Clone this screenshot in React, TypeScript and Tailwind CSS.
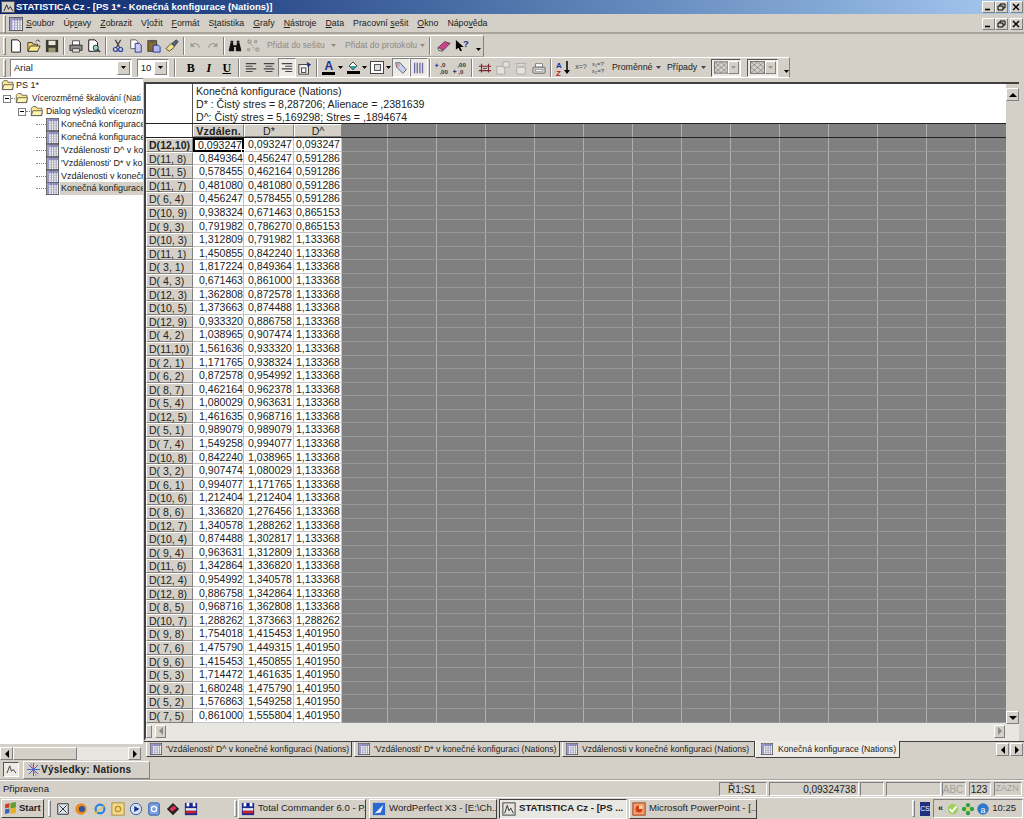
import type { ReactNode } from "react";

const raised = "border border-t-white border-l-white border-r-[#808080] border-b-[#808080]";
const sunken = "border border-t-[#808080] border-l-[#808080] border-r-white border-b-white";

const rows: [string, string, string, string][] = [
  ["D(12,10)", "0,093247", "0,093247", "0,093247"],
  ["D(11, 8)", "0,849364", "0,456247", "0,591286"],
  ["D(11, 5)", "0,578455", "0,462164", "0,591286"],
  ["D(11, 7)", "0,481080", "0,481080", "0,591286"],
  ["D( 6, 4)", "0,456247", "0,578455", "0,591286"],
  ["D(10, 9)", "0,938324", "0,671463", "0,865153"],
  ["D( 9, 3)", "0,791982", "0,786270", "0,865153"],
  ["D(10, 3)", "1,312809", "0,791982", "1,133368"],
  ["D(11, 1)", "1,450855", "0,842240", "1,133368"],
  ["D( 3, 1)", "1,817224", "0,849364", "1,133368"],
  ["D( 4, 3)", "0,671463", "0,861000", "1,133368"],
  ["D(12, 3)", "1,362808", "0,872578", "1,133368"],
  ["D(10, 5)", "1,373663", "0,874488", "1,133368"],
  ["D(12, 9)", "0,933320", "0,886758", "1,133368"],
  ["D( 4, 2)", "1,038965", "0,907474", "1,133368"],
  ["D(11,10)", "1,561636", "0,933320", "1,133368"],
  ["D( 2, 1)", "1,171765", "0,938324", "1,133368"],
  ["D( 6, 2)", "0,872578", "0,954992", "1,133368"],
  ["D( 8, 7)", "0,462164", "0,962378", "1,133368"],
  ["D( 5, 4)", "1,080029", "0,963631", "1,133368"],
  ["D(12, 5)", "1,461635", "0,968716", "1,133368"],
  ["D( 5, 1)", "0,989079", "0,989079", "1,133368"],
  ["D( 7, 4)", "1,549258", "0,994077", "1,133368"],
  ["D(10, 8)", "0,842240", "1,038965", "1,133368"],
  ["D( 3, 2)", "0,907474", "1,080029", "1,133368"],
  ["D( 6, 1)", "0,994077", "1,171765", "1,133368"],
  ["D(10, 6)", "1,212404", "1,212404", "1,133368"],
  ["D( 8, 6)", "1,336820", "1,276456", "1,133368"],
  ["D(12, 7)", "1,340578", "1,288262", "1,133368"],
  ["D(10, 4)", "0,874488", "1,302817", "1,133368"],
  ["D( 9, 4)", "0,963631", "1,312809", "1,133368"],
  ["D(11, 6)", "1,342864", "1,336820", "1,133368"],
  ["D(12, 4)", "0,954992", "1,340578", "1,133368"],
  ["D(12, 8)", "0,886758", "1,342864", "1,133368"],
  ["D( 8, 5)", "0,968716", "1,362808", "1,133368"],
  ["D(10, 7)", "1,288262", "1,373663", "1,288262"],
  ["D( 9, 8)", "1,754018", "1,415453", "1,401950"],
  ["D( 7, 6)", "1,475790", "1,449315", "1,401950"],
  ["D( 9, 6)", "1,415453", "1,450855", "1,401950"],
  ["D( 5, 3)", "1,714472", "1,461635", "1,401950"],
  ["D( 9, 2)", "1,680248", "1,475790", "1,401950"],
  ["D( 5, 2)", "1,576863", "1,549258", "1,401950"],
  ["D( 7, 5)", "0,861000", "1,555804", "1,401950"],
];

const menus: [string, string, string][] = [
  ["", "S", "oubor"],
  ["Úp", "r", "avy"],
  ["", "Z", "obrazit"],
  ["V", "l", "ožit"],
  ["", "F", "ormát"],
  ["S", "t", "atistika"],
  ["", "G", "rafy"],
  ["", "N", "ástroje"],
  ["", "D", "ata"],
  ["Pracovní ", "s", "ešit"],
  ["", "O", "kno"],
  ["Nápo", "v", "ěda"],
];

const grayCols = Array.from({ length: 14 }, (_, i) => i);

function Ico({ children, className = "w-[14px] h-[14px]" }: { children: ReactNode; className?: string }) {
  return (
    <svg viewBox="0 0 16 16" className={`${className} shrink-0`}>
      {children}
    </svg>
  );
}

function Slot({ w = "w-[18px]", pressed = false, children }: { w?: string; pressed?: boolean; children: ReactNode }) {
  return (
    <div
      className={`${w} h-[19px] shrink-0 flex items-center justify-center ${
        pressed ? "border border-t-[#808080] border-l-[#808080] border-r-white border-b-white bg-[#eceae5]" : ""
      }`}
    >
      {children}
    </div>
  );
}

function Sep({ w = "w-[6px]" }: { w?: string }) {
  return (
    <div className={`${w} shrink-0 flex justify-center`}>
      <div className="w-[2px] h-[18px] border-l border-l-[#808080] border-r border-r-white" />
    </div>
  );
}

function Grip() {
  return <div className="w-[3px] h-[18px] ml-[3px] shrink-0 border border-t-white border-l-white border-r-[#808080] border-b-[#808080]" />;
}

function Caret({ color = "#000" }: { color?: string }) {
  return (
    <svg viewBox="0 0 5 3" className="w-[5px] h-[3px] shrink-0">
      <path d="M0 0h5L2.5 3z" fill={color} />
    </svg>
  );
}

function Combo({ w, text }: { w: string; text: string }) {
  return (
    <div className={`${w} h-[18px] shrink-0 flex items-center bg-white ${sunken}`}>
      <span className="flex-1 pl-[3px] text-[9.5px] text-[#222] leading-none">{text}</span>
      <div className={`w-[13px] h-[14px] mr-[1px] flex items-center justify-center bg-[#d4d0c8] ${raised}`}>
        <Caret />
      </div>
    </div>
  );
}

function Lines({ align }: { align: "l" | "c" | "r" }) {
  const alt = align === "l" ? "M2 6h8M2 12h8" : align === "c" ? "M4 6h8M4 12h8" : "M6 6h8M6 12h8";
  return (
    <Ico>
      <path d="M2 3h12M2 9h12" stroke="#444" strokeWidth="1.3" />
      <path d={alt} stroke="#444" strokeWidth="1.3" />
    </Ico>
  );
}

function GridIco({ className = "w-[13px] h-[13px]" }: { className?: string }) {
  return (
    <Ico className={className}>
      <rect x="0.5" y="0.5" width="15" height="15" fill="#fff" stroke="#444" />
      <rect x="1" y="1" width="14" height="3" fill="#9a9ac8" />
      <rect x="1" y="1" width="3" height="14" fill="#9a9ac8" />
      <path d="M6.5 1v14M9.5 1v14M12.5 1v14" stroke="#7676b0" />
      <path d="M4 6.5h11M4 9.5h11M4 12.5h11" stroke="#b4b4b4" />
    </Ico>
  );
}

function Folder({ open = false }: { open?: boolean }) {
  return (
    <Ico className="w-[14px] h-[13px]">
      <path d="M1 4l2-2h4l1 2h6v9H1z" fill="#ffe98a" stroke="#555" />
      {open ? <path d="M1 13l2-6h12l-2 6z" fill="#fff3b0" stroke="#555" /> : null}
    </Ico>
  );
}

function Box() {
  return (
    <div className="w-[8px] h-[8px] border border-[#808080] bg-white flex items-center justify-center shrink-0">
      <div className="w-[4px] h-px bg-black" />
    </div>
  );
}

function Leaf({ text, selected = false }: { text: string; selected?: boolean }) {
  return (
    <div className="h-[12.9px] flex items-center pl-[36px]">
      <div className="w-[10px] border-t border-dotted border-[#808080] shrink-0" />
      <GridIco className="w-[13px] h-[13px]" />
      <span className={`ml-[1px] pl-[1px] flex-1 leading-[13px] ${selected ? "bg-[#d4d0c8]" : ""}`}>{text}</span>
    </div>
  );
}

function Tab({ w, text }: { w: string; text: string }) {
  return (
    <div className={`${w} h-[15px] shrink-0 flex items-center gap-[4px] pl-[3px] bg-[#d4d0c8] border-r border-b border-r-[#404040] border-b-[#404040] border-l border-l-white`}>
      <GridIco className="w-[12px] h-[12px]" />
      <span className="whitespace-nowrap">{text}</span>
    </div>
  );
}

function Arrow({ dir, color = "#000" }: { dir: "l" | "r" | "u" | "d"; color?: string }) {
  const d = { l: "M5 0v8L1 4z", r: "M1 0v8l4-4z", u: "M0 5h8L4 1z", d: "M0 1h8L4 5z" }[dir];
  const size = dir === "l" || dir === "r" ? "w-[6px] h-[8px]" : "w-[8px] h-[6px]";
  const box = dir === "l" || dir === "r" ? "0 0 6 8" : "0 0 8 6";
  return (
    <svg viewBox={box} className={size}>
      <path d={d} fill={color} />
    </svg>
  );
}

function ScrollBtn({ dir, color, className = "w-[13px] h-[13px]" }: { dir: "l" | "r" | "u" | "d"; color?: string; className?: string }) {
  return (
    <div className={`${className} shrink-0 flex items-center justify-center bg-[#d4d0c8] ${raised}`}>
      <Arrow dir={dir} color={color} />
    </div>
  );
}

function Pattern() {
  return (
    <svg viewBox="0 0 14 12" className="w-[15px] h-[13px]">
      <rect x="0.5" y="0.5" width="13" height="11" fill="#d4d0c8" stroke="#777" />
      <path d="M1 1l12 10M13 1L1 11M7 1l6 5-6 5-6-5z" stroke="#777" strokeWidth="0.6" fill="none" />
    </svg>
  );
}

function PatternCombo({ w }: { w: string }) {
  return (
    <div className={`${w} h-[18px] shrink-0 flex items-center justify-between pl-[2px] pr-[1px] bg-[#eceae5] border border-t-[#555] border-l-[#555] border-r-white border-b-white`}>
      <Pattern />
      <div className={`w-[11px] h-[13px] flex items-center justify-center bg-[#d4d0c8] ${raised}`}>
        <Caret color="#999" />
      </div>
    </div>
  );
}

function Task({ w, pressed, icon, text }: { w: string; pressed?: boolean; icon: ReactNode; text: string }) {
  return (
    <div
      className={`${w} h-[20px] shrink-0 flex items-center gap-[3px] pl-[2px] whitespace-nowrap overflow-hidden ${
        pressed ? "bg-[#e9e7e2] font-bold border border-t-[#404040] border-l-[#404040] border-r-white border-b-white" : `bg-[#d4d0c8] border border-t-white border-l-white border-r-[#404040] border-b-[#404040]`
      }`}
    >
      {icon}
      <span>{text}</span>
    </div>
  );
}

function StatusCell({ w, children, className = "" }: { w: string; children?: ReactNode; className?: string }) {
  return <div className={`${w} h-[14px] shrink-0 flex items-center justify-end pr-[2px] ${sunken} ${className}`}>{children}</div>;
}

function GrayCells() {
  return (
    <>
      {grayCols.map(c => (
        <div key={c} className={`${c === 0 ? "w-[46px]" : "w-[49px]"} shrink-0 border-r border-r-[#b0b0b0]`} />
      ))}
    </>
  );
}

export default function App() {
  return (
    <div className="w-[1024px] h-[819px] overflow-hidden flex flex-col bg-[#d4d0c8] text-black text-[9px] font-['Liberation_Sans',Arial,sans-serif]">
      {/* title bar */}
      <div className="h-[14px] shrink-0 flex items-center bg-gradient-to-r from-[#0a246a] to-[#a6caf0] text-white">
        <div className="w-[14px] h-[12px] ml-[1px] flex items-center justify-center bg-[#d4d0c8] border border-[#555]">
          <svg viewBox="0 0 12 10" className="w-[11px] h-[9px]">
            <path d="M1 9l3-7 2 5 2-3 3 5" fill="none" stroke="#223" strokeWidth="1" />
          </svg>
        </div>
        <span className="ml-[1px] font-bold text-[9.5px] leading-none whitespace-nowrap">STATISTICA Cz - [PS 1* - Konečná konfigurace (Nations)]</span>
        <div className="ml-auto mr-[1px] flex">
          <WinBtn kind="min" />
          <WinBtn kind="max" />
          <div className="w-[2px]" />
          <WinBtn kind="close" />
        </div>
      </div>

      {/* menu bar */}
      <div className="h-[19px] shrink-0 mt-[1px] flex items-center border-b-2 border-b-[#a8a49c] text-[#222]">
        <Grip />
        <div className="w-[15px] h-[14px] ml-[2px] shrink-0 flex items-center justify-center">
          <GridIco className="w-[14px] h-[14px]" />
        </div>
        <div className="ml-[3px] flex items-center gap-[9px] text-[8.8px]">
          {menus.map(m => (
            <span key={m[0] + m[1]} className="whitespace-pre">
              {m[0]}
              <span className="underline">{m[1]}</span>
              {m[2]}
            </span>
          ))}
        </div>
        <div className="ml-auto mr-[1px] flex">
          <WinBtn kind="min" />
          <WinBtn kind="max" />
          <div className="w-[2px]" />
          <WinBtn kind="close" />
        </div>
      </div>

      {/* standard toolbar */}
      <div className="h-[23px] shrink-0 flex items-center">
        <div className="w-[484px] h-[22px] flex items-center border-t border-t-white border-r border-r-[#808080] border-b border-b-[#a8a49c]">
          <Grip />
          <div className="w-[1px]" />
          <Slot><Ico><path d="M3 1h7l3 3v11H3z" fill="#fff" stroke="#000" /></Ico></Slot>
          <Slot>
            <Ico>
              <path d="M1 14V4h5l1 2h5v8z" fill="#f0d060" stroke="#333" />
              <path d="M1 14l3-6h11l-3 6z" fill="#ffe98a" stroke="#333" />
              <path d="M10 3l2-2 3 2" stroke="#333" fill="none" />
            </Ico>
          </Slot>
          <Slot>
            <Ico>
              <rect x="1" y="1" width="14" height="14" fill="#3a3a30" />
              <rect x="4" y="2" width="8" height="5" fill="#e8e8d8" />
              <rect x="4" y="10" width="8" height="5" fill="#9a9a70" />
            </Ico>
          </Slot>
          <Sep />
          <Slot>
            <Ico>
              <path d="M4 2h8v5H4z" fill="#fff" stroke="#444" />
              <path d="M1 7h14v6H1z" fill="#8a8a8a" stroke="#333" />
              <path d="M4 11h8v4H4z" fill="#ddd" stroke="#444" />
            </Ico>
          </Slot>
          <Slot>
            <Ico>
              <path d="M2 1h7l3 3v10H2z" fill="#fff" stroke="#000" />
              <circle cx="10" cy="10" r="3" fill="#8fd0d0" stroke="#222" />
              <path d="M12 12l3 3" stroke="#222" strokeWidth="1.5" />
            </Ico>
          </Slot>
          <Sep />
          <Slot>
            <Ico>
              <path d="M5 1l5 9M11 1L6 10" stroke="#333" strokeWidth="1.2" />
              <circle cx="5" cy="12" r="2.3" fill="none" stroke="#223ca0" strokeWidth="1.3" />
              <circle cx="11" cy="12" r="2.3" fill="none" stroke="#223ca0" strokeWidth="1.3" />
            </Ico>
          </Slot>
          <Slot>
            <Ico>
              <path d="M2 1h6l2 2v8H2z" fill="#fff" stroke="#555" />
              <path d="M7 5h5l2 2v8H7z" fill="#c8c8f0" stroke="#203090" />
            </Ico>
          </Slot>
          <Slot>
            <Ico>
              <rect x="1" y="2" width="10" height="12" fill="#8a6a30" stroke="#333" />
              <rect x="4" y="1" width="4" height="3" fill="#555" />
              <path d="M7 7h6l2 2v6H7z" fill="#b0b8f0" stroke="#203090" />
            </Ico>
          </Slot>
          <Slot>
            <Ico>
              <path d="M1 11l6-6 4 4-6 5z" fill="#f0e080" stroke="#444" />
              <path d="M8 5l5-4 2 2-4 5z" fill="#506880" stroke="#333" />
            </Ico>
          </Slot>
          <Sep w="w-[5px]" />
          <Slot>
            <Ico>
              <path d="M4 7c3-3 8-2 9 3" fill="none" stroke="#9a9a9a" strokeWidth="1.3" />
              <path d="M3 4v5h5z" fill="#9a9a9a" />
            </Ico>
          </Slot>
          <Slot>
            <Ico>
              <path d="M12 7C9 4 4 5 3 10" fill="none" stroke="#9a9a9a" strokeWidth="1.3" />
              <path d="M13 4v5H8z" fill="#9a9a9a" />
            </Ico>
          </Slot>
          <Sep w="w-[4px]" />
          <Slot>
            <Ico>
              <path d="M1 12l2-8h3v3h4V4h3l2 8v2H9V9H7v5H1z" fill="#111" />
              <rect x="3" y="2" width="3" height="2" fill="#111" />
              <rect x="10" y="2" width="3" height="2" fill="#111" />
            </Ico>
          </Slot>
          <Slot>
            <Ico>
              <path d="M4 5c4 2 5 5 5 8" fill="none" stroke="#777" strokeDasharray="1 1" />
              <circle cx="4" cy="3" r="2" fill="#bbb" stroke="#666" strokeWidth="0.5" />
              <circle cx="11" cy="3" r="1.5" fill="#bbb" stroke="#666" strokeWidth="0.5" />
              <circle cx="3" cy="12" r="1.5" fill="#bbb" stroke="#666" strokeWidth="0.5" />
              <circle cx="13" cy="12" r="2" fill="#bbb" stroke="#666" strokeWidth="0.5" />
            </Ico>
          </Slot>
          <div className="ml-[5px] flex items-center gap-[3px] text-[8.4px] text-[#8c8a84] whitespace-nowrap">
            <span className="w-[61px]">Přidat do sešitu</span>
            <Caret color="#8c8a84" />
          </div>
          <div className="ml-[9px] flex items-center gap-[3px] text-[8.6px] text-[#8c8a84] whitespace-nowrap">
            <span className="w-[72px]">Přidat do protokolu</span>
            <Caret color="#8c8a84" />
          </div>
          <Sep w="w-[10px]" />
          <Slot>
            <Ico>
              <path d="M1 10l8-7 6 2-8 8z" fill="#d04090" stroke="#444" />
              <path d="M1 10l1 3 5 1" fill="#fff" stroke="#444" />
            </Ico>
          </Slot>
          <Slot>
            <Ico>
              <path d="M1 1v11l3-2 2 4 2-1-2-4h4z" fill="#000" />
              <text x="9" y="9" fontSize="11" fontWeight="bold" fill="#1a2a90">?</text>
            </Ico>
          </Slot>
          <div className="ml-[5px] mt-[8px] w-[5px] flex flex-col items-center gap-px">
            <Caret />
          </div>
        </div>
      </div>

      {/* format toolbar */}
      <div className="h-[21px] shrink-0 flex items-center">
        <div className="w-[790px] h-[21px] flex items-center border-t border-t-white border-r border-r-[#808080] border-b border-b-white">
          <Grip />
          <div className="w-[5px]" />
          <Combo w="w-[122px]" text="Arial" />
          <div className="w-[6px]" />
          <Combo w="w-[32px]" text="10" />
          <Sep w="w-[13px]" />
          <Slot><span className="font-['Liberation_Serif',serif] font-bold text-[12px]">B</span></Slot>
          <Slot><span className="font-['Liberation_Serif',serif] font-bold italic text-[12px]">I</span></Slot>
          <Slot><span className="font-['Liberation_Serif',serif] font-bold underline text-[12px]">U</span></Slot>
          <Sep w="w-[6px]" />
          <Slot><Lines align="l" /></Slot>
          <Slot><Lines align="c" /></Slot>
          <Slot pressed><Lines align="r" /></Slot>
          <Slot>
            <Ico>
              <rect x="1" y="4" width="11" height="11" fill="#eee" stroke="#333" />
              <rect x="4" y="8" width="5" height="5" fill="#fff" stroke="#333" />
              <path d="M10 1l5 3-4 3" fill="#203090" />
            </Ico>
          </Slot>
          <Sep w="w-[6px]" />
          <Slot>
            <div className="flex flex-col items-center leading-none">
              <span className="font-bold text-[12px] leading-[12px] text-[#203090]">A</span>
              <div className="w-[13px] h-[3px] bg-black" />
            </div>
          </Slot>
          <Caret />
          <div className="w-[2px]" />
          <Slot>
            <div className="flex flex-col items-center">
              <svg viewBox="0 0 12 10" className="w-[12px] h-[10px]">
                <path d="M2 5l4-4 4 4-4 4z" fill="#fff" stroke="#444" />
                <path d="M2 5h8l-4 4z" fill="#30a0a0" />
              </svg>
              <div className="w-[13px] h-[3px] bg-black" />
            </div>
          </Slot>
          <Caret />
          <div className="w-[1px]" />
          <Slot>
            <div className="w-[14px] h-[13px] bg-white border border-[#444] flex items-center justify-center">
              <div className="w-[7px] h-[7px] border border-[#555] bg-[#ddd]" />
            </div>
          </Slot>
          <Caret />
          <div className="w-[1px]" />
          <Slot pressed>
            <Ico>
              <path d="M2 2h5l7 8-4 4-7-7z" fill="#c8d0f0" stroke="#555" />
              <circle cx="5" cy="5" r="1" fill="#fff" stroke="#c04040" strokeWidth="0.7" />
            </Ico>
          </Slot>
          <Slot pressed>
            <Ico>
              <path d="M3 2v12M6 2v12M9 2v12M12 2v12" stroke="#6868a8" strokeWidth="1.5" />
            </Ico>
          </Slot>
          <Sep w="w-[5px]" />
          <Slot>
            <Ico>
              <text x="6" y="7" fontSize="7" fontWeight="bold" fill="#333">,0</text>
              <text x="5" y="15" fontSize="7" fontWeight="bold" fill="#333">,00</text>
              <path d="M0 5h4M2 3v4" stroke="#203090" />
            </Ico>
          </Slot>
          <Slot>
            <Ico>
              <text x="5" y="7" fontSize="7" fontWeight="bold" fill="#333">,00</text>
              <text x="6" y="15" fontSize="7" fontWeight="bold" fill="#333">,0</text>
              <path d="M0 12h4M2 10v4" stroke="#203090" />
            </Ico>
          </Slot>
          <Sep w="w-[7px]" />
          <Slot>
            <Ico>
              <path d="M4 3v10M12 3v10M1 6h14M1 11h14" stroke="#7a2a30" strokeWidth="1.3" />
              <path d="M6 8.5h4" stroke="#555" strokeWidth="1.3" />
            </Ico>
          </Slot>
          <Slot>
            <Ico>
              <rect x="1" y="6" width="9" height="9" fill="#e4e2dc" stroke="#a8a8a8" />
              <path d="M8 1h7v6H8z" fill="#e4e2dc" stroke="#a8a8a8" />
            </Ico>
          </Slot>
          <Slot>
            <Ico>
              <path d="M2 3h12l-3 3H5zM3 7h10v8H3z" fill="#e4e2dc" stroke="#a8a8a8" />
            </Ico>
          </Slot>
          <Slot>
            <Ico>
              <path d="M4 3h8v4H4z" fill="#fff" stroke="#777" />
              <rect x="1" y="7" width="14" height="7" rx="1" fill="#ccc" stroke="#666" />
              <rect x="4" y="10" width="8" height="2" fill="#fff" stroke="#666" strokeWidth="0.5" />
            </Ico>
          </Slot>
          <Sep w="w-[7px]" />
          <Slot>
            <svg viewBox="0 0 16 16" className="w-4 h-4">
              <text x="0" y="8" fontSize="8" fontWeight="bold" fill="#2030a0">A</text>
              <text x="0" y="16" fontSize="8" fontWeight="bold" fill="#c02020">Z</text>
              <path d="M11 1v11" stroke="#000" strokeWidth="1.5" />
              <path d="M8 10h6l-3 4z" fill="#000" />
            </svg>
          </Slot>
          <span className="w-[16px] shrink-0 text-[7px] text-[#444] text-center whitespace-nowrap">x=?</span>
          <div className="w-[16px] shrink-0 flex flex-col text-[6px] leading-[6.5px] text-[#444] text-center whitespace-nowrap ml-[1px]">
            <span>x₁=?</span>
            <span>x₂=?</span>
          </div>
          <div className="ml-[6px] flex items-center gap-[4px] text-[8.8px] text-[#222] whitespace-nowrap">
            <span className="w-[40px]">Proměnné</span>
            <Caret color="#444" />
          </div>
          <div className="ml-[6px] flex items-center gap-[4px] text-[8.8px] text-[#222] whitespace-nowrap">
            <span className="w-[30px]">Případy</span>
            <Caret color="#444" />
          </div>
          <div className="w-[6px]" />
          <PatternCombo w="w-[30px]" />
          <div className="w-[8px]" />
          <PatternCombo w="w-[31px]" />
          <div className="ml-[6px] mt-[8px]">
            <Caret />
          </div>
        </div>
      </div>

      {/* tree + document */}
      <div className="flex-1 min-h-0 flex">
        <div className="w-[143px] shrink-0 flex flex-col">
          <div className="flex-1 min-h-0 bg-white overflow-hidden whitespace-nowrap text-[9px] text-[#222] border-t border-t-[#808080]">
            <div className="h-[13px] flex items-center pl-[1px] gap-[1px]">
              <Folder open />
              <span>PS 1*</span>
            </div>
            <div className="h-[13px] flex items-center pl-[3px]">
              <Box />
              <div className="w-[4px] border-t border-dotted border-[#808080] shrink-0" />
              <Folder open />
              <span className="ml-[3px] text-[8.3px]">Vícerozměrné škálování (Nati</span>
            </div>
            <div className="h-[13px] flex items-center pl-[18px]">
              <Box />
              <div className="w-[4px] border-t border-dotted border-[#808080] shrink-0" />
              <Folder open />
              <span className="ml-[2px] text-[8.6px]">Dialog výsledků vícerozm</span>
            </div>
            <Leaf text="Konečná konfigurace" />
            <Leaf text="Konečná konfigurace" />
            <Leaf text="'Vzdálenosti' D^ v ko" />
            <Leaf text="'Vzdálenosti' D* v ko" />
            <Leaf text="Vzdálenosti v konečn" />
            <Leaf text="Konečná konfigurace" selected />
          </div>
          <div className="h-[16px] shrink-0 flex items-end pr-[2px]">
            <div className="flex-1 h-[13px] flex bg-[#e8e6e0]">
              <ScrollBtn dir="l" />
              <div className={`w-[64px] bg-[#d4d0c8] ${raised}`} />
              <div className="flex-1" />
              <ScrollBtn dir="r" />
            </div>
          </div>
        </div>

        <div className="flex-1 min-w-0 flex flex-col pl-[1px] pt-[4px]">
          {/* document frame */}
          <div className="flex-1 min-h-0 flex flex-col mr-[5px] border-t-2 border-l-2 border-b-[3px] border-t-[#404040] border-l-[#404040] border-b-[#e8e6e0] bg-[#e8e6e0]">
            <div className="flex-1 min-h-0 flex overflow-hidden">
              <div className="flex-1 min-w-0 flex flex-col overflow-hidden">
                {/* caption */}
                <div className="h-[40px] shrink-0 flex bg-white border-b border-b-[#222] text-[10.6px] leading-[13px] text-[#222]">
                  <div className="w-[47px] shrink-0 border-r border-r-[#555]" />
                  <div className="pl-[3px] pt-[1px] whitespace-nowrap">
                    <div>Konečná konfigurace (Nations)</div>
                    <div>D* : Čistý stres = 8,287206; Alienace = ,2381639</div>
                    <div>D^: Čistý stres = 5,169298; Stres = ,1894674</div>
                  </div>
                </div>
                {/* column headers */}
                <div className="h-[14px] shrink-0 flex border-b border-b-[#222] text-[10.6px] leading-[12px] text-[#222]">
                  <div className="w-[47px] shrink-0 bg-white border-r border-r-[#555]" />
                  <div className={`w-[51px] shrink-0 bg-[#d4d0c8] font-bold text-center tracking-[0.2px] ${raised}`}>Vzdálen.</div>
                  <div className={`w-[50px] shrink-0 bg-[#d4d0c8] text-center ${raised}`}>D*</div>
                  <div className={`w-[48px] shrink-0 bg-[#d4d0c8] text-center ${raised}`}>D^</div>
                  <div className="flex-1 flex bg-[#808080]">
                    <GrayCells />
                  </div>
                </div>
                {/* data rows */}
                <div className="flex-1 min-h-0 overflow-hidden text-[10.55px] text-[#222]">
                  {rows.map((r, i) => (
                    <div key={r[0]} className="h-[13.6px] flex leading-[12px]">
                      <div className={`w-[47px] shrink-0 pl-[2px] whitespace-pre bg-[#d4d0c8] ${raised} border-r-[#555] ${i === 0 ? "font-bold" : ""}`}>{r[0]}</div>
                      <div className={`w-[51px] shrink-0 relative text-right bg-white ${i === 0 ? "border-2 border-black leading-[10px]" : "border-b border-r border-[#c4c4c4]"}`}>
                        {r[1]}
                        {i === 0 ? <div className="absolute right-[-3px] bottom-[-3px] w-[4px] h-[4px] bg-black border border-white" /> : null}
                      </div>
                      <div className="w-[50px] shrink-0 text-right pr-[1px] bg-white border-b border-r border-[#c4c4c4]">{r[2]}</div>
                      <div className="w-[48px] shrink-0 text-right pr-[1px] bg-white border-b border-r border-[#c4c4c4]">{r[3]}</div>
                      <div className="flex-1 flex bg-[#808080] border-b border-b-[#979797]">
                        <GrayCells />
                      </div>
                    </div>
                  ))}
                </div>
              </div>
              {/* vertical scrollbar */}
              <div className="w-[13px] shrink-0 flex flex-col justify-between bg-[#d4d0c8] pt-[4px]">
                <ScrollBtn dir="u" className="w-[13px] h-[13px]" />
                <ScrollBtn dir="d" className="w-[13px] h-[13px]" />
              </div>
            </div>
            {/* horizontal scrollbar */}
            <div className="h-[14px] shrink-0 flex items-center pr-[14px] bg-[#e8e6e0]">
              <div className={`w-[6px] h-[13px] shrink-0 bg-[#d4d0c8] ${raised}`} />
              <div className="w-[3px]" />
              <ScrollBtn dir="l" color="#8a8a8a" className="w-[11px] h-[13px]" />
              <div className="flex-1" />
              <ScrollBtn dir="r" color="#8a8a8a" className="w-[11px] h-[13px]" />
            </div>
          </div>
          {/* sheet tabs */}
          <div className="h-[19px] shrink-0 flex items-start border-t border-t-[#404040] text-[8.6px] text-[#222]">
            <div className="w-[2px]" />
            <Tab w="w-[206px]" text="'Vzdálenosti' D^ v konečné konfiguraci (Nations)" />
            <div className="w-[2px]" />
            <Tab w="w-[206px]" text="'Vzdálenosti' D* v konečné konfiguraci (Nations)" />
            <div className="w-[2px]" />
            <Tab w="w-[193px]" text="Vzdálenosti v konečné konfiguraci (Nations)" />
            <div className="w-[145px] h-[17px] shrink-0 -mt-px flex items-center gap-[5px] pl-[5px] bg-[#ecebe6] border-r border-b border-r-[#404040] border-b-[#404040] border-l border-l-white whitespace-nowrap">
              <GridIco className="w-[12px] h-[12px]" />
              <span>Konečná konfigurace (Nations)</span>
            </div>
            <div className="ml-auto mt-[1px] flex gap-[1px] mr-[1px]">
              <ScrollBtn dir="l" />
              <ScrollBtn dir="r" />
            </div>
          </div>
        </div>
      </div>

      {/* results bar */}
      <div className="h-[20px] shrink-0 flex items-center pl-[3px] border-b border-b-[#a8a49c]">
        <div className={`w-[16px] h-[15px] flex items-center justify-center bg-[#eceae5] border border-t-[#555] border-l-[#555] border-r-white border-b-white`}>
          <svg viewBox="0 0 12 10" className="w-[11px] h-[9px]">
            <path d="M1 9l3-8 2 6 2-2 3 4" fill="none" stroke="#333" />
          </svg>
        </div>
        <div className={`w-[127px] h-[18px] ml-[4px] flex items-center bg-[#d4d0c8] ${raised}`}>
          <svg viewBox="0 0 16 16" className="w-[15px] h-[15px] ml-[2px] shrink-0">
            <path d="M8 1v14M1 8h14M3 3l10 10M13 3L3 13" stroke="#2a50d0" strokeWidth="0.9" />
            <path d="M5 1l6 14" stroke="#d060a0" strokeWidth="0.7" />
          </svg>
          <span className="font-bold text-[10px] tracking-[0.25px] text-[#222] whitespace-nowrap">Výsledky: Nations</span>
        </div>
      </div>

      {/* status bar */}
      <div className="h-[17px] shrink-0 flex items-center pl-[3px] pr-[2px] border-t border-t-white text-[10px] text-[#222]">
        <span className="flex-1 text-[9.5px]">Připravena</span>
        <StatusCell w="w-[48px]" className="!justify-center">Ř1;S1</StatusCell>
        <div className="w-[2px]" />
        <StatusCell w="w-[90px]">0,09324738</StatusCell>
        <div className="w-[1px]" />
        <StatusCell w="w-[24px]" />
        <div className="w-[2px]" />
        <StatusCell w="w-[55px]" />
        <div className="w-[1px]" />
        <StatusCell w="w-[24px]" className="!justify-center text-[#a0a0a0]">ABC</StatusCell>
        <div className="w-[3px]" />
        <StatusCell w="w-[22px]" className="!justify-center">123</StatusCell>
        <div className="w-[3px]" />
        <StatusCell w="w-[28px]" className="!justify-center text-[#a0a0a0] text-[9px]">ZÁZN</StatusCell>
      </div>

      {/* taskbar */}
      <div className="h-[22px] shrink-0 flex items-center pl-[1px] border-t border-t-white text-[9.6px] text-[#222]">
        <div className={`w-[43px] h-[19px] shrink-0 flex items-center gap-[2px] pl-[2px] border border-t-white border-l-white border-r-[#404040] border-b-[#404040]`}>
          <svg viewBox="0 0 12 12" className="w-[13px] h-[13px] shrink-0">
            <path d="M1 2l4-1v4l-4 1z" fill="#d04020" />
            <path d="M6 1l5-1v5l-5 1z" fill="#60a030" />
            <path d="M1 7l4-1v4l-4 1z" fill="#3060c0" />
            <path d="M6 6l5-1v5l-5 1z" fill="#e8b020" />
          </svg>
          <span className="font-bold text-[9.5px]">Start</span>
        </div>
        <div className="w-[4px]" />
        <div className={`w-[3px] h-[17px] shrink-0 ${raised}`} />
        <div className="w-[5px]" />
        <div className="w-[142px] shrink-0 flex items-center justify-between">
          <Tray><path d="M2 2h12v12H2z" fill="#dfe4e8" stroke="#223" /><path d="M4 4l8 8M12 4l-8 8" stroke="#223" /></Tray>
          <Tray><circle cx="8" cy="8" r="6.5" fill="#e88a20" /><circle cx="9" cy="8" r="3.5" fill="#3050a0" /></Tray>
          <Tray><circle cx="8" cy="8" r="5" fill="none" stroke="#2a80e0" strokeWidth="2.5" /><path d="M1 13C5 12 12 6 15 2" stroke="#e8c040" strokeWidth="1.3" fill="none" /></Tray>
          <Tray><rect x="1" y="1" width="14" height="14" fill="#f0d890" stroke="#a88830" /><circle cx="8" cy="8" r="3" fill="none" stroke="#c09020" strokeWidth="1.5" /></Tray>
          <Tray><circle cx="8" cy="8" r="6.5" fill="#d8e4f4" stroke="#2050a0" /><path d="M6 4.5v7l6-3.5z" fill="#203090" /></Tray>
          <Tray><rect x="2" y="1" width="12" height="14" rx="2" fill="#7aa0e0" stroke="#2050a0" /><circle cx="8" cy="8" r="3" fill="none" stroke="#fff" strokeWidth="1.4" /></Tray>
          <Tray><path d="M8 1l7 7-7 7-7-7z" fill="#222" /><path d="M4 8l5-4 3 3-5 4z" fill="#e03060" /></Tray>
          <Tray><rect x="1" y="1" width="14" height="14" fill="#1a2a90" /><rect x="3" y="1" width="3" height="4" fill="#fff" /><rect x="10" y="1" width="3" height="4" fill="#fff" /><rect x="2" y="7" width="12" height="3" fill="#e8e8f0" /><rect x="2" y="10" width="12" height="3" fill="#c82030" /></Tray>
        </div>
        <div className="w-[36px]" />
        <div className={`w-[3px] h-[17px] shrink-0 ${raised}`} />
        <div className="w-[1px]" />
        <Task
          w="w-[128px]"
          text="Total Commander 6.0 - P..."
          icon={<Tray><rect x="1" y="1" width="14" height="14" fill="#1a2a90" /><rect x="3" y="1" width="3" height="4" fill="#fff" /><rect x="10" y="1" width="3" height="4" fill="#fff" /><rect x="2" y="7" width="12" height="3" fill="#e8e8f0" /><rect x="2" y="10" width="12" height="3" fill="#c82030" /></Tray>}
        />
        <div className="w-[3px]" />
        <Task
          w="w-[128px]"
          text="WordPerfect X3 - [E:\Ch..."
          icon={<Tray><rect x="1" y="1" width="14" height="14" fill="#2a6ad0" /><path d="M3 13L13 3l-3 9z" fill="#e8f0ff" /></Tray>}
        />
        <div className="w-[2px]" />
        <Task
          w="w-[128px]"
          pressed
          text="STATISTICA Cz - [PS ..."
          icon={<Tray><rect x="1" y="1" width="14" height="14" fill="#e4e2dc" stroke="#333" /><path d="M3 13l3-9 2 6 2-3 3 6" stroke="#223" fill="none" /></Tray>}
        />
        <div className="w-[2px]" />
        <Task
          w="w-[128px]"
          text="Microsoft PowerPoint - [..."
          icon={<Tray><rect x="1" y="1" width="14" height="14" fill="#f0a070" stroke="#a03010" /><circle cx="8" cy="8" r="4" fill="#d04010" /><rect x="8" y="4" width="4" height="4" fill="#f8d0b0" /></Tray>}
        />
        <div className="flex-1" />
        <div className={`w-[3px] h-[17px] shrink-0 ${raised}`} />
        <div className="w-[5px]" />
        <div className="w-[10px] h-[14px] shrink-0 flex items-center justify-center bg-[#203080] text-white text-[7px] leading-none">CS</div>
        <div className="w-[3px]" />
        <div className={`w-[90px] h-[19px] shrink-0 flex items-center gap-[1px] pl-[4px] ${sunken}`}>
          <span className="w-[7px] text-[9px] font-bold">«</span>
          <Tray><path d="M2 8a6 6 0 1 0 12 0 6 6 0 1 0-12 0" fill="#a0d060" /><path d="M4 8l3 3 5-6" stroke="#fff" strokeWidth="2" fill="none" /></Tray>
          <Tray><circle cx="8" cy="3.5" r="2.5" fill="#30a040" /><circle cx="8" cy="12.5" r="2.5" fill="#30a040" /><circle cx="3.5" cy="8" r="2.5" fill="#30a040" /><circle cx="12.5" cy="8" r="2.5" fill="#30a040" /><circle cx="8" cy="8" r="2" fill="#e0d040" /></Tray>
          <Tray><circle cx="8" cy="8" r="6.5" fill="#3078c8" /><text x="5" y="12" fontSize="10" fill="#fff">a</text></Tray>
          <span className="ml-auto mr-[6px] text-[9.5px]">10:25</span>
        </div>
        <div className="w-[1px]" />
      </div>
    </div>
  );
}

function WinBtn({ kind }: { kind: "min" | "max" | "close" }) {
  return (
    <div className={`w-[13px] h-[12px] flex items-center justify-center bg-[#d4d0c8] ${raised}`}>
      <svg viewBox="0 0 9 8" className="w-[9px] h-[8px]">
        {kind === "min" ? <path d="M1 6.5h5" stroke="#000" strokeWidth="1.6" /> : null}
        {kind === "max" ? (
          <>
            <path d="M3 1h5v4H3z" fill="none" stroke="#000" />
            <path d="M1 3h5v4H1z" fill="#d4d0c8" stroke="#000" />
          </>
        ) : null}
        {kind === "close" ? <path d="M1 1l6 6M7 1L1 7" stroke="#000" strokeWidth="1.4" /> : null}
      </svg>
    </div>
  );
}

function Tray({ children }: { children: ReactNode }) {
  return (
    <svg viewBox="0 0 16 16" className="w-[14px] h-[14px] shrink-0">
      {children}
    </svg>
  );
}
